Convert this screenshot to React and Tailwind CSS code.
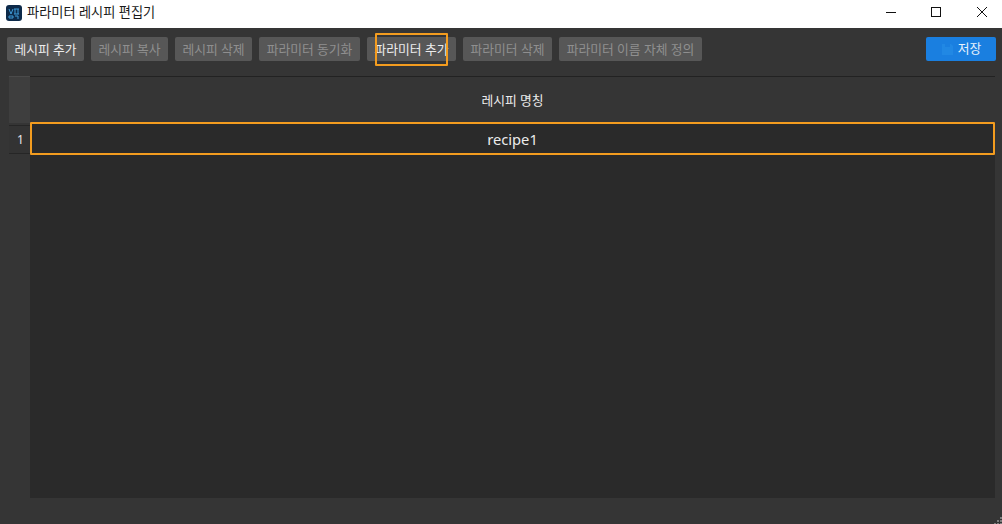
const font = "font-['Noto_Sans','Noto_Sans_CJK_KR',sans-serif]";

const ToolButton = ({ label, width, enabled = false, highlight = false }) => (
  <div
    className={`relative flex h-6 shrink-0 items-center justify-center rounded-[2px] bg-[#575757] pt-px text-[12.8px] ${
      enabled ? 'text-[#ececec]' : 'text-[#8f8f8f]'
    } ${width}`}
  >
    {label}
    {highlight && (
      <div className="absolute left-[8px] top-[-4px] h-[33px] w-[73px] rounded-[1px] border-2 border-[#f39c1f]" />
    )}
  </div>
);

const App = () => {
  return (
    <div className={`relative flex h-[524px] w-[1002px] flex-col overflow-hidden bg-[#353535] ${font}`}>
      <div className="flex h-7 shrink-0 items-center bg-white pl-[6px]">
        <svg width="16" height="16" viewBox="0 0 16 16" className="mb-[2px] shrink-0">
          <rect width="16" height="16" rx="3" fill="#0d2a4a" />
          <path d="M3 4l2 5 2-5M8 4h5M9 4v5M12 4v5M8 9h5M3 11h4v2H3zM9 11h3v3" stroke="#3f9bd8" strokeWidth="1" fill="none" />
        </svg>
        <span className="mb-[3px] ml-[5px] text-[13.2px] text-[#1a1a1a]">파라미터 레시피 편집기</span>
        <div className="mb-[4px] ml-auto flex items-center gap-[35px] pr-[15px]">
          <svg width="10" height="10" viewBox="0 0 10 10">
            <path d="M0 5.5h10" stroke="#111111" strokeWidth="1" />
          </svg>
          <svg width="10" height="10" viewBox="0 0 10 10">
            <rect x="0.5" y="0.5" width="9" height="9" stroke="#111111" strokeWidth="1" fill="none" />
          </svg>
          <svg width="10" height="10" viewBox="0 0 10 10" className="ml-px">
            <path d="M0 0l10 10M10 0L0 10" stroke="#111111" strokeWidth="1" />
          </svg>
        </div>
      </div>

      <div className="flex shrink-0 pl-[7px] pr-[6px] pt-[9px]">
        <div className="flex gap-[7px]">
          <ToolButton label="레시피 추가" width="w-[77px]" enabled />
          <ToolButton label="레시피 복사" width="w-[77px]" />
          <ToolButton label="레시피 삭제" width="w-[77px]" />
          <ToolButton label="파라미터 동기화" width="w-[101px]" />
          <ToolButton label="파라미터 추가" width="w-[89px]" enabled highlight />
          <ToolButton label="파라미터 삭제" width="w-[89px]" />
          <ToolButton label="파라미터 이름 자체 정의" width="w-[143px]" />
        </div>
        <div className="ml-auto flex h-6 w-[70px] items-center justify-center gap-[5px] rounded-[2px] bg-[#1a7fe0] pl-px text-[12.8px] text-[#e8f2fc]">
          <svg width="11" height="11" viewBox="0 0 11 11">
            <path d="M0 0h9l2 2v9H0z" fill="#2188e4" />
            <rect x="3" y="0" width="5" height="3" fill="#1a7fe0" />
          </svg>
          저장
        </div>
      </div>

      <div className="ml-[9px] mr-[7px] mt-[15px] flex h-[422px] shrink-0">
        <div className="flex w-[21px] shrink-0 flex-col">
          <div className="h-[47px] border-t border-[#4a4a4a] bg-[#3e3e3e]" />
          <div className="mt-[2px] flex h-[29px] items-center justify-center border-y border-[#262626] bg-[#333333] pl-[2px] text-xs text-[#e8e8e8]">
            1
          </div>
        </div>
        <div className="flex min-w-0 flex-1 flex-col bg-[#2a2a2a]">
          <div className="flex h-[46px] shrink-0 items-center justify-center border-t border-[#222222] bg-[#353535] pt-[2px] text-[12.8px] text-[#ececec]">
            레시피 명칭
          </div>
          <div className="flex h-[33px] shrink-0 items-center justify-center rounded-[1px] border-2 border-[#f39c1f] pt-px text-[14.7px] text-[#ececec]">
            recipe1
          </div>
        </div>
      </div>

      {/* resize grip */}
      <svg width="8" height="7" viewBox="0 0 8 7" className="absolute bottom-0 right-0">
        <path d="M6 0h2v2H6zM3 3h2v2H3zM6 3h2v2H6zM0 6h2v1H0zM3 6h2v1H3zM6 6h2v1H6z" fill="#7d7d7d" />
      </svg>
    </div>
  );
};

export default App;
